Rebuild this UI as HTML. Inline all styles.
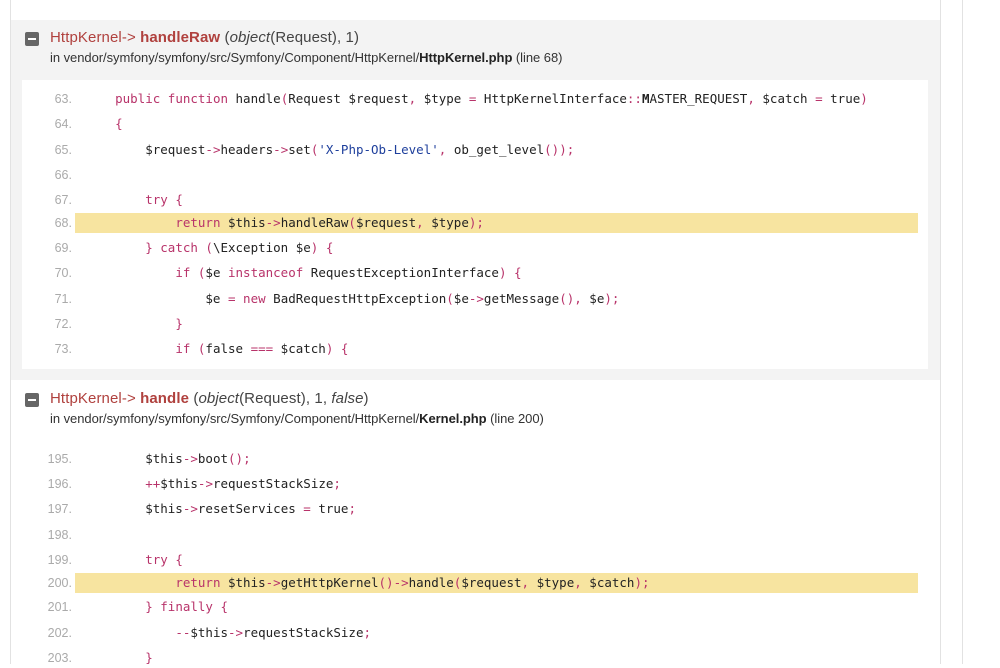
<!DOCTYPE html>
<html><head><meta charset="utf-8"><style>
body{margin:0;width:1000px;height:664px;overflow:hidden;background:#fff;position:relative;font-family:"Liberation Sans",sans-serif}
.vl{position:absolute;top:0;height:664px;width:1px;background:#e2e2e2}
.blk{position:absolute;left:11px;width:929px;background:#f3f3f3}
.ic{position:absolute;left:25px;width:14px;height:14px;background:#666;border-radius:2px}
.ic:after{content:"";position:absolute;left:3px;top:6px;width:8px;height:2px;background:#fff}
.t{position:absolute;left:50px;font-size:15px;color:#b0413e;white-space:nowrap;letter-spacing:0.1px}
.t b{font-weight:bold}.t span{color:#444}
.p{position:absolute;left:50px;font-size:13px;color:#333;white-space:nowrap;letter-spacing:-0.05px}
.p b{color:#222}
.code{position:absolute;background:#fff}
.ln{position:absolute;left:0;width:906px;height:20px;line-height:20px;white-space:pre}
.n{position:absolute;left:0;width:50px;text-align:right;font-size:12.5px;color:#aaa;font-family:"Liberation Sans",sans-serif}
.c{position:absolute;left:63px;font-family:"DejaVu Sans Mono",monospace;font-size:12.5px;color:#222}
.hl{position:absolute;left:53px;width:843px;top:0;height:20px;background:#f7e4a0}
.k{color:#b8336a}.s{color:#1e3f9c}
</style></head><body>
<div class="vl" style="left:10px"></div>
<div class="vl" style="left:940px"></div>
<div class="vl" style="left:962px"></div>
<div class="blk" style="top:20px;height:360px"></div>
<div class="ic" style="top:32px"></div>
<div class="t" style="top:29px">HttpKernel-&gt; <b>handleRaw</b> <span>(<i>object</i>(Request), 1)</span></div>
<div class="p" style="top:50px">in vendor/symfony/symfony/src/Symfony/Component/HttpKernel/<b>HttpKernel.php</b> (line 68)</div>
<div class="code" style="left:22px;top:80px;width:906px;height:289px">
<div class="ln" style="top:9px"><span class="n">63.</span><span class="c">    <span class="k">public function</span> handle<span class="k">(</span>Request $request<span class="k">,</span> $type <span class="k">=</span> HttpKernelInterface<span class="k">::</span><b>M</b>ASTER_REQUEST<span class="k">,</span> $catch <span class="k">=</span> true<span class="k">)</span></span></div>
<div class="ln" style="top:34px"><span class="n">64.</span><span class="c">    <span class="k">{</span></span></div>
<div class="ln" style="top:60px"><span class="n">65.</span><span class="c">        $request<span class="k">-&gt;</span>headers<span class="k">-&gt;</span>set<span class="k">(</span><span class="s">'X-Php-Ob-Level'</span><span class="k">,</span> ob_get_level<span class="k">());</span></span></div>
<div class="ln" style="top:85px"><span class="n">66.</span></div>
<div class="ln" style="top:110px"><span class="n">67.</span><span class="c">        <span class="k">try {</span></span></div>
<div class="ln" style="top:133px"><div class="hl"></div><span class="n">68.</span><span class="c">            <span class="k">return</span> $this<span class="k">-&gt;</span>handleRaw<span class="k">(</span>$request<span class="k">,</span> $type<span class="k">);</span></span></div>
<div class="ln" style="top:158px"><span class="n">69.</span><span class="c">        <span class="k">} catch (</span>\Exception $e<span class="k">) {</span></span></div>
<div class="ln" style="top:183px"><span class="n">70.</span><span class="c">            <span class="k">if (</span>$e <span class="k">instanceof</span> RequestExceptionInterface<span class="k">) {</span></span></div>
<div class="ln" style="top:209px"><span class="n">71.</span><span class="c">                $e <span class="k">= new</span> BadRequestHttpException<span class="k">(</span>$e<span class="k">-&gt;</span>getMessage<span class="k">(),</span> $e<span class="k">);</span></span></div>
<div class="ln" style="top:234px"><span class="n">72.</span><span class="c">            <span class="k">}</span></span></div>
<div class="ln" style="top:259px"><span class="n">73.</span><span class="c">            <span class="k">if (</span>false <span class="k">===</span> $catch<span class="k">) {</span></span></div>
</div>
<div class="ic" style="top:393px"></div>
<div class="t" style="top:390px">HttpKernel-&gt; <b>handle</b> <span>(<i>object</i>(Request), 1, <i>false</i>)</span></div>
<div class="p" style="top:411px">in vendor/symfony/symfony/src/Symfony/Component/HttpKernel/<b>Kernel.php</b> (line 200)</div>
<div class="code" style="left:22px;top:441px;width:906px;height:223px">
<div class="ln" style="top:8px"><span class="n">195.</span><span class="c">        $this<span class="k">-&gt;</span>boot<span class="k">();</span></span></div>
<div class="ln" style="top:33px"><span class="n">196.</span><span class="c">        <span class="k">++</span>$this<span class="k">-&gt;</span>requestStackSize<span class="k">;</span></span></div>
<div class="ln" style="top:58px"><span class="n">197.</span><span class="c">        $this<span class="k">-&gt;</span>resetServices <span class="k">=</span> true<span class="k">;</span></span></div>
<div class="ln" style="top:84px"><span class="n">198.</span></div>
<div class="ln" style="top:109px"><span class="n">199.</span><span class="c">        <span class="k">try {</span></span></div>
<div class="ln" style="top:132px"><div class="hl"></div><span class="n">200.</span><span class="c">            <span class="k">return</span> $this<span class="k">-&gt;</span>getHttpKernel<span class="k">()-&gt;</span>handle<span class="k">(</span>$request<span class="k">,</span> $type<span class="k">,</span> $catch<span class="k">);</span></span></div>
<div class="ln" style="top:156px"><span class="n">201.</span><span class="c">        <span class="k">} finally {</span></span></div>
<div class="ln" style="top:182px"><span class="n">202.</span><span class="c">            <span class="k">--</span>$this<span class="k">-&gt;</span>requestStackSize<span class="k">;</span></span></div>
<div class="ln" style="top:207px"><span class="n">203.</span><span class="c">        <span class="k">}</span></span></div>
</div>
</body></html>
